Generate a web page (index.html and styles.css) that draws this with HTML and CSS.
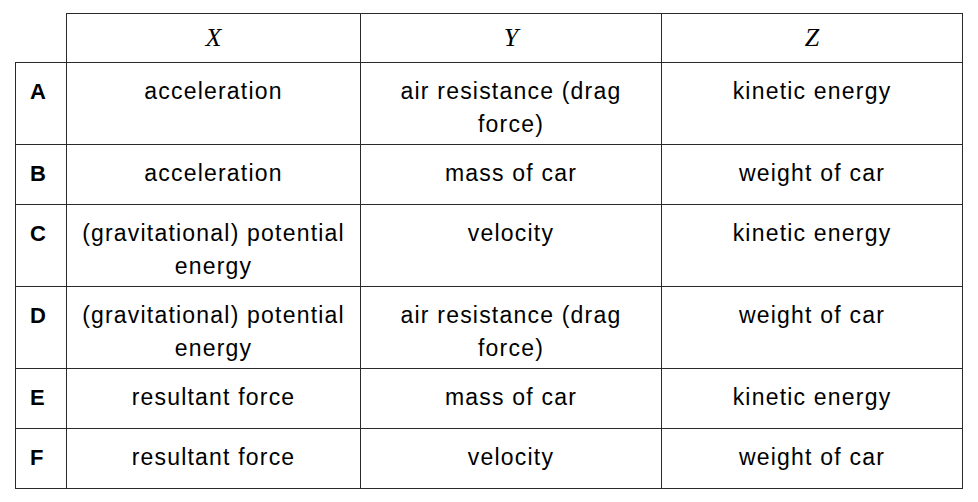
FILE: index.html
```html
<!DOCTYPE html>
<html>
<head>
<meta charset="utf-8">
<link rel="stylesheet" href="styles.css">
</head>
<body>
<table class="grid">
  <colgroup>
    <col class="c-key"><col class="c-x"><col class="c-y"><col class="c-z">
  </colgroup>
  <thead>
    <tr class="head">
      <th class="corner"></th>
      <th class="var">X</th>
      <th class="var">Y</th>
      <th class="var">Z</th>
    </tr>
  </thead>
  <tbody>
    <tr>
      <td class="key">A</td>
      <td>acceleration</td>
      <td>air resistance (drag force)</td>
      <td>kinetic energy</td>
    </tr>
    <tr>
      <td class="key">B</td>
      <td>acceleration</td>
      <td>mass of car</td>
      <td>weight of car</td>
    </tr>
    <tr>
      <td class="key">C</td>
      <td>(gravitational) potential energy</td>
      <td>velocity</td>
      <td>kinetic energy</td>
    </tr>
    <tr>
      <td class="key">D</td>
      <td>(gravitational) potential energy</td>
      <td>air resistance (drag force)</td>
      <td>weight of car</td>
    </tr>
    <tr>
      <td class="key">E</td>
      <td>resultant force</td>
      <td>mass of car</td>
      <td>kinetic energy</td>
    </tr>
    <tr>
      <td class="key">F</td>
      <td>resultant force</td>
      <td>velocity</td>
      <td>weight of car</td>
    </tr>
  </tbody>
</table>
</body>
</html>
```
FILE: styles.css
```css
html, body {
  margin: 0;
  background: #ffffff;
}
body {
  padding: 13px 0 0 15px;
  font-family: "Liberation Sans", Arial, sans-serif;
  color: #000000;
}
.grid {
  border-collapse: collapse;
  table-layout: fixed;
  width: 947px;
}
.c-key { width: 51px; }
.c-x { width: 294px; }
.c-y { width: 301px; }
.c-z { width: 301px; }

.grid th, .grid td {
  border: 1px solid #2a2a2a;
}
.head {
  height: 49px;
}
.head th {
  font-family: "Liberation Serif", "Times New Roman", serif;
  font-style: italic;
  font-weight: normal;
  font-size: 26px;
  vertical-align: middle;
  text-align: center;
  padding: 0;
}
.grid th.corner {
  border-top: hidden;
  border-left: hidden;
}
.grid tbody tr {
  height: 60px;
}
.grid td {
  font-size: 23px;
  letter-spacing: 1.2px;
  line-height: 33px;
  text-align: center;
  vertical-align: top;
  padding: 12px 8px 3px;
}
.grid td.key {
  font-weight: bold;
  letter-spacing: 0;
  font-size: 22px;
  text-align: left;
  padding-left: 14px;
  padding-right: 0;
}
```
